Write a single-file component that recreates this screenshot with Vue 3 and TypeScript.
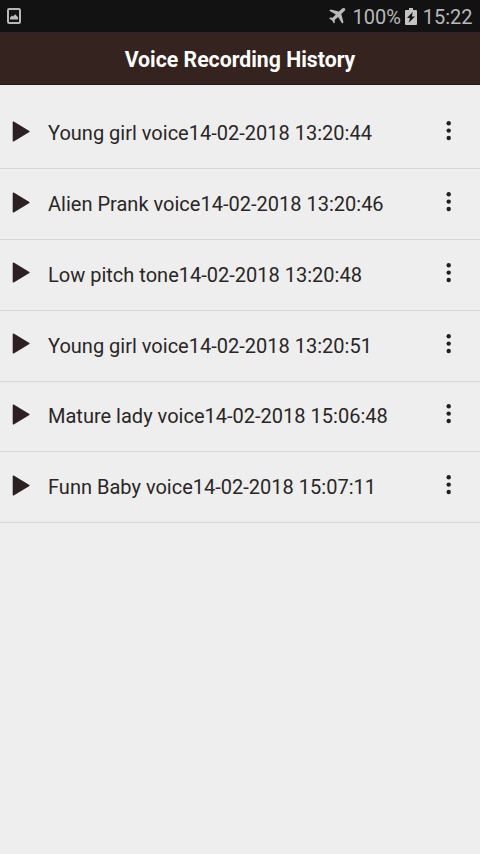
<script setup lang="ts">
interface Recording {
  id: number
  name: string
}

const recordings: Recording[] = [
  { id: 1, name: 'Young girl voice14-02-2018 13:20:44' },
  { id: 2, name: 'Alien Prank voice14-02-2018 13:20:46' },
  { id: 3, name: 'Low pitch tone14-02-2018 13:20:48' },
  { id: 4, name: 'Young girl voice14-02-2018 13:20:51' },
  { id: 5, name: 'Mature lady voice14-02-2018 15:06:48' },
  { id: 6, name: 'Funn Baby voice14-02-2018 15:07:11' },
]
</script>

<template>
  <div class="screen">
    <div class="status">
      <svg class="picture" width="14" height="16" viewBox="0 0 14 16">
        <rect x="1" y="1" width="12" height="14" rx="1.2" fill="none" stroke="#b9b9b9" stroke-width="2" />
        <path d="M3 11.4V9.5L5 7.6l1 .8 2.200-2.200L11 9.300v2.100z" fill="#b9b9b9" />
      </svg>
      <div class="status-right">
        <svg class="plane" width="17" height="16" viewBox="0 0 17 16">
          <path
            d="M15.8.5c.8.6.5 1.6-.2 2.3L12.300 5.900l2.200 8.300-1.400 1.200-4-6.400-3.400 3.100.2 2.500-1 1-1.800-3.200L.1 10.600l1-1 2.500.2 3.200-3.200L.3 2.700l1.300-1.300 8.300 2.100L13.200.6c.8-.7 1.900-.7 2.600-.1z"
            fill="#b9b9b9"
          />
        </svg>
        <span class="percent">100%</span>
        <svg class="battery" width="12" height="17" viewBox="0 0 12 17">
          <path d="M4 0h4v2h3q1 0 1 1v13q0 1-1 1H1q-1 0-1-1V3q0-1 1-1h3z" fill="#c4c4c4" />
          <path d="M7.700 4L2 10h3l-1.300 4.700L10 8.500H6.900z" fill="#121212" />
        </svg>
        <span class="clock">15:22</span>
      </div>
    </div>
    <header class="header"><h1 class="title">Voice Recording History</h1></header>
    <ul class="list">
      <li v-for="rec in recordings" :key="rec.id" class="row">
        <svg class="play" width="18" height="21" viewBox="0 0 18 21">
          <path d="M1.400 1.200L17 10.500 1.400 19.800z" fill="#2c2022" stroke="#2c2022" stroke-width="1.400" stroke-linejoin="round" />
        </svg>
        <span class="name">{{ rec.name }}</span>
        <svg class="more" width="6" height="20" viewBox="0 0 6 20">
          <circle cx="2.700" cy="2.200" r="2.200" fill="#231f20" />
          <circle cx="2.700" cy="9.600" r="2.200" fill="#231f20" />
          <circle cx="2.700" cy="17" r="2.200" fill="#231f20" />
        </svg>
      </li>
    </ul>
  </div>
</template>

<style>
body {
  margin: 0;
  background: #eeeeee;
}
</style>

<style scoped>
.screen {
  width: 480px;
  height: 854px;
  overflow: hidden;
  background: #eeeeee;
  font-family: Roboto, sans-serif;
}
.status {
  box-sizing: border-box;
  height: 32px;
  padding: 0 7.4px 0 7px;
  display: flex;
  align-items: center;
  justify-content: space-between;
  background: #121212;
  color: #b9b9b9;
  font-size: 20px;
  line-height: 32px;
}
.status-right {
  display: flex;
  align-items: center;
}
.percent {
  margin-left: 6px;
  padding-top: 2px;
  line-height: 32px;
}
.battery {
  margin-left: 4px;
}
.clock {
  margin-left: 6px;
  padding-top: 2px;
  line-height: 32px;
}
.header {
  box-sizing: border-box;
  height: 53px;
  padding-top: 2px;
  display: flex;
  align-items: center;
  justify-content: center;
  background: #352320;
  border-top: 1px solid #34222a;
  border-bottom: 1px solid #211713;
}
.title {
  margin: 0;
  color: #ffffff;
  font-size: 21.25px;
  font-weight: 700;
  line-height: 30px;
}
.list {
  margin: 0;
  padding: 13.4px 0 0;
  list-style: none;
}
.row {
  box-sizing: border-box;
  height: 70.8px;
  padding: 0 28px 4px 12px;
  display: flex;
  align-items: center;
  border-bottom: 1.5px solid #d7d7d7;
}
.name {
  flex: 1;
  margin: 4px 0 0 18px;
  color: #2a2627;
  font-size: 20.03px;
  line-height: 28px;
  white-space: nowrap;
}
</style>
